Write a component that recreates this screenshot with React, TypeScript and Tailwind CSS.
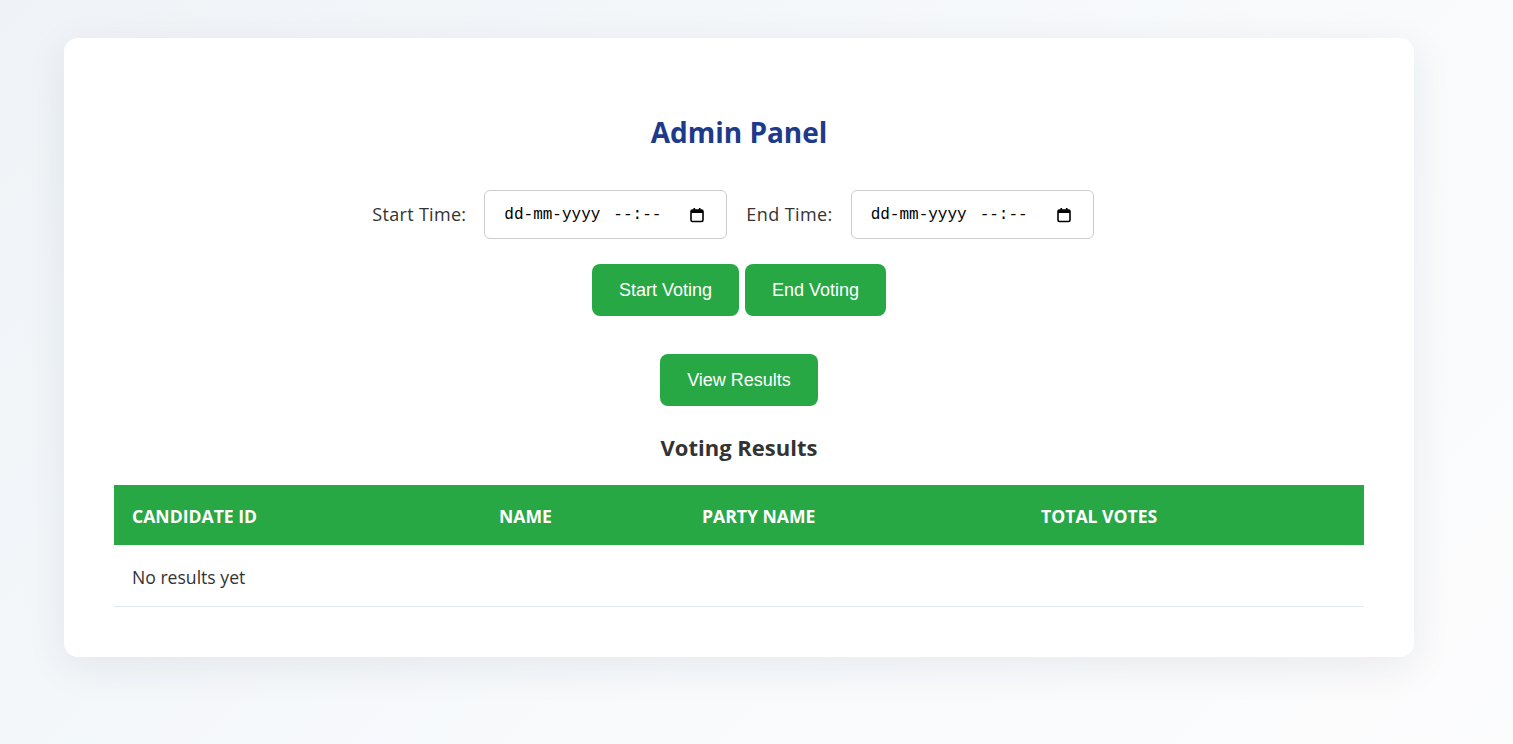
import React from "react";

const columns = [
  { label: "Candidate ID", width: "w-[367px]" },
  { label: "Name", width: "w-[203px]" },
  { label: "Party Name", width: "w-[339px]" },
  { label: "Total Votes", width: "w-[341px]" },
];

const DateField = () => (
  <div className="flex h-[49px] w-[243px] items-center justify-between rounded-[6px] border border-[#cccccc] bg-white pl-[19px] pr-[21px]">
    <span className="flex gap-[13px] text-[16px] text-black [font-family:'Liberation_Mono',monospace]">
      <span>dd-mm-yyyy</span>
      <span>--:--</span>
    </span>
    <svg width="16" height="16" viewBox="0 0 16 16" className="text-black">
      <rect x="2" y="3" width="12" height="11.5" rx="1.5" fill="none" stroke="currentColor" strokeWidth="1.6" />
      <rect x="2" y="3" width="12" height="3" fill="currentColor" />
      <rect x="4.5" y="1" width="1.6" height="3" fill="currentColor" />
      <rect x="9.9" y="1" width="1.6" height="3" fill="currentColor" />
    </svg>
  </div>
);

const GreenButton = ({ children }: { children: React.ReactNode }) => (
  <button className="h-[52px] rounded-[8px] bg-[#28a745] px-[27px] text-[18px] text-white [font-family:'Liberation_Sans',Arial,sans-serif]">
    {children}
  </button>
);

const App = () => {
  return (
    <div className="min-h-[744px] w-full bg-[linear-gradient(135deg,#eff3f7_0%,#f8fafc_60%,#fcfcfd_100%)] pt-[38px] pb-[87px] [font-family:'Open_Sans',sans-serif]">
      <div className="ml-[64px] w-[1350px] rounded-[14px] bg-white px-[50px] pt-[50px] pb-[50px] shadow-[0_10px_40px_rgba(30,41,59,0.08)]">
        <h1 className="mt-[26px] text-center text-[28px] font-bold leading-[36px] text-[#1e3a8a]">
          Admin Panel
        </h1>

        <div className="mt-[40px] flex items-center justify-center pr-[12px]">
          <label className="mr-[18px] text-[18px] tracking-[0.3px] text-[#333333]">Start Time:</label>
          <DateField />
          <label className="ml-[19px] mr-[18px] text-[18px] tracking-[0.4px] text-[#333333]">End Time:</label>
          <DateField />
        </div>

        <div className="mt-[25px] flex justify-center gap-[6px]">
          <GreenButton>Start Voting</GreenButton>
          <GreenButton>End Voting</GreenButton>
        </div>

        <div className="mt-[38px] flex justify-center">
          <GreenButton>View Results</GreenButton>
        </div>

        <h2 className="mt-[26px] text-center text-[22px] font-bold leading-[30px] text-[#333333]">
          Voting Results
        </h2>

        <table className="mt-[23px] w-full table-fixed border-collapse">
          <thead>
            <tr className="h-[60px] bg-[#28a745]">
              {columns.map((c) => (
                <th
                  key={c.label}
                  className={`${c.width} px-[18px] pt-[3px] text-left text-[17.6px] font-bold uppercase text-white`}
                >
                  {c.label}
                </th>
              ))}
            </tr>
          </thead>
          <tbody>
            <tr className="h-[61px] border-b border-[#e2e8f0]">
              <td colSpan={4} className="px-[18px] pt-[3px] text-[17.6px] text-[#333333]">
                No results yet
              </td>
            </tr>
          </tbody>
        </table>
      </div>
    </div>
  );
};

export default App;
